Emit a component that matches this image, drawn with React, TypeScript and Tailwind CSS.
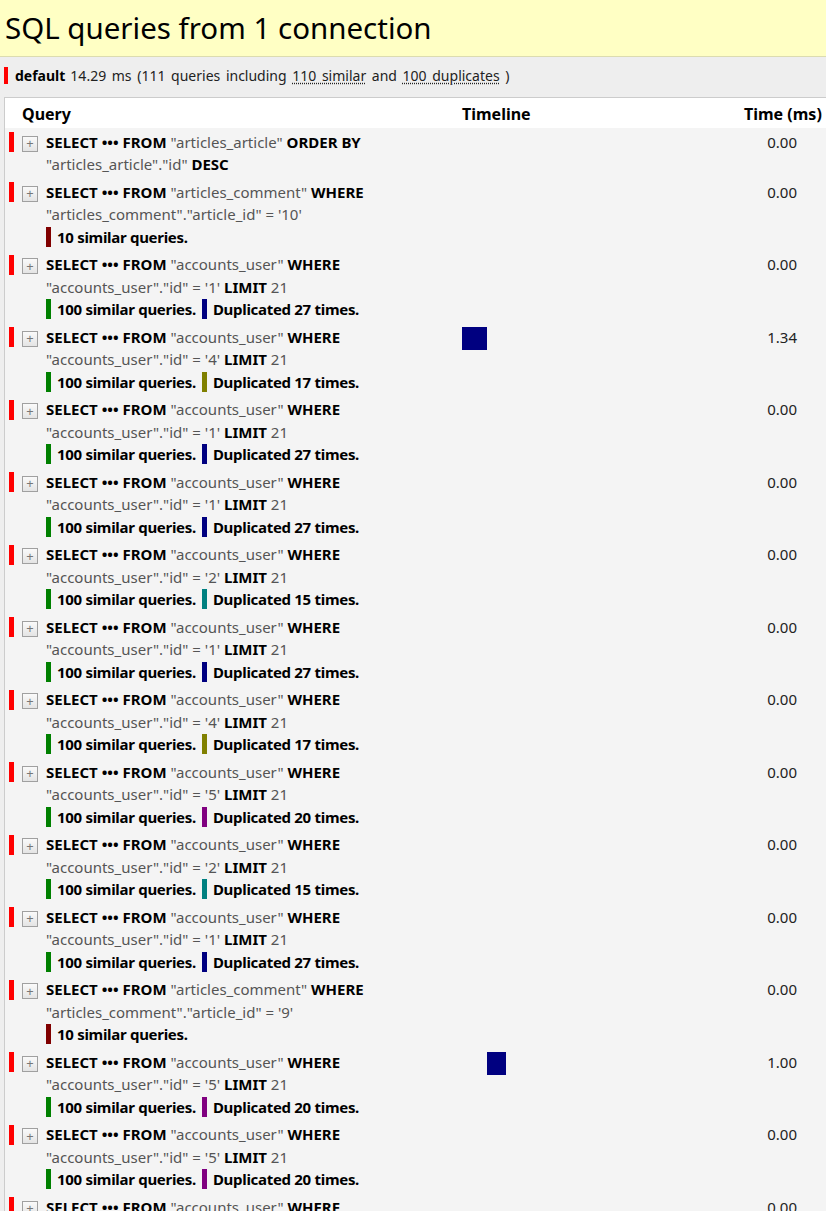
import React from 'react'

type Badge = { color: string; text: string }
type Row = {
  table: string
  line2: React.ReactNode
  orderBy?: boolean
  badges: Badge[]
  time: string
  bar?: { left: number; width: number }
}

const K = ({ children }: { children: React.ReactNode }) => (
  <span className="font-bold text-black">{children}</span>
)
const S = ({ children }: { children: React.ReactNode }) => (
  <span className="text-[#555]">{children}</span>
)

const SIM10 = { color: 'bg-[#800000]', text: '10 similar queries.' }
const SIM100 = { color: 'bg-[#008000]', text: '100 similar queries.' }
const dup = (n: number) => {
  const c: Record<number, string> = {
    27: 'bg-[#000080]',
    17: 'bg-[#808000]',
    15: 'bg-[#008080]',
    20: 'bg-[#800080]',
  }
  return { color: c[n], text: `Duplicated ${n} times.` }
}

const userLine = (id: string) => (
  <>
    <S>"accounts_user"."id" = '{id}'</S> <K>LIMIT</K> <S>21</S>
  </>
)

const userRow = (id: string, d: number, time = '0.00', bar?: { left: number; width: number }): Row => ({
  table: 'accounts_user',
  line2: userLine(id),
  badges: [SIM100, dup(d)],
  time,
  bar,
})

const rows: Row[] = [
  {
    table: 'articles_article',
    orderBy: true,
    line2: (
      <>
        <S>"articles_article"."id"</S> <K>DESC</K>
      </>
    ),
    badges: [],
    time: '0.00',
  },
  {
    table: 'articles_comment',
    line2: <S>"articles_comment"."article_id" = '10'</S>,
    badges: [SIM10],
    time: '0.00',
  },
  userRow('1', 27),
  userRow('4', 17, '1.34', { left: 0, width: 25 }),
  userRow('1', 27),
  userRow('1', 27),
  userRow('2', 15),
  userRow('1', 27),
  userRow('4', 17),
  userRow('5', 20),
  userRow('2', 15),
  userRow('1', 27),
  {
    table: 'articles_comment',
    line2: <S>"articles_comment"."article_id" = '9'</S>,
    badges: [SIM10],
    time: '0.00',
  },
  userRow('5', 20, '1.00', { left: 25, width: 19 }),
  userRow('5', 20),
  userRow('5', 20),
]

function QueryRow({ row }: { row: Row }) {
  return (
    <div className="flex pt-[2.5px] pb-[2.5px] leading-[22.5px]">
      <div className="w-[17px] shrink-0 pl-[4px] pt-[1.5px]">
        <div className="w-[5px] h-[20px] bg-[#ff0000]" />
      </div>
      <div className="w-[24px] shrink-0 pt-[5px]">
        <div className="w-[16px] h-[16px] border border-[#a0a0a0] bg-gradient-to-b from-[#fafafa] to-[#e4e4e4] flex items-center justify-center text-[#777] text-[13px] leading-none font-normal">
          +
        </div>
      </div>
      <div className="w-[416px] shrink-0">
        <div className="whitespace-nowrap">
          <K>SELECT ••• FROM</K> <S>"{row.table}"</S> <K>{row.orderBy ? 'ORDER BY' : 'WHERE'}</K>
        </div>
        <div className="whitespace-nowrap">{row.line2}</div>
        {row.badges.length > 0 && (
          <div className="flex items-center whitespace-nowrap font-bold text-black tracking-[-0.3px]">
            {row.badges.map((b) => (
              <span key={b.text} className="flex items-center mr-[6px]">
                <span className={`inline-block w-[5px] h-[20px] mr-[6px] ${b.color}`} />
                {b.text}
              </span>
            ))}
          </div>
        )}
      </div>
      <div className="w-[270px] shrink-0 pt-[1.5px]">
        {row.bar && (
          <div
            className="h-[23px] bg-[#000080]"
            style={{ marginLeft: row.bar.left, width: row.bar.width }}
          />
        )}
      </div>
      <div className="w-[65px] shrink-0 text-right text-[#222]">{row.time}</div>
    </div>
  )
}

export default function App() {
  return (
    <div className="w-[826px] h-[1211px] overflow-hidden bg-[#eeeeee] font-['Noto_Sans','Open_Sans',sans-serif] text-[15px] text-black">
      <div className="h-[57px] bg-[#ffffc4] border-b border-[#dcdcb0] flex items-center pl-[5px]">
        <h1 className="text-[29.5px] leading-none text-black font-normal">
          SQL queries from 1 connection
        </h1>
      </div>
      <div className="h-[40px] flex items-center pl-[4px] pb-[4px] text-[14px] [word-spacing:2px]">
        <span className="inline-block w-[4px] h-[17px] bg-[#ff0000] mr-[7px]" />
        <span className="font-bold">default</span>
        <span className="ml-[5px] text-[#222]">
          14.29 ms (111 queries including{' '}
          <span className="underline decoration-dotted underline-offset-2">110 similar</span> and{' '}
          <span className="underline decoration-dotted underline-offset-2">100 duplicates</span> )
        </span>
      </div>
      <div className="ml-[4px] border-l border-t border-[#cccccc]">
        <div className="h-[30px] bg-white flex items-center font-bold text-[16px] pt-[1px]">
          <div className="w-[457px] pl-[17px]">Query</div>
          <div className="w-[282px]">Timeline</div>
          <div className="flex-1 whitespace-nowrap">Time (ms)</div>
        </div>
        <div className="bg-[#f4f4f4]">
          {rows.map((r, i) => (
            <QueryRow key={i} row={r} />
          ))}
        </div>
      </div>
    </div>
  )
}
